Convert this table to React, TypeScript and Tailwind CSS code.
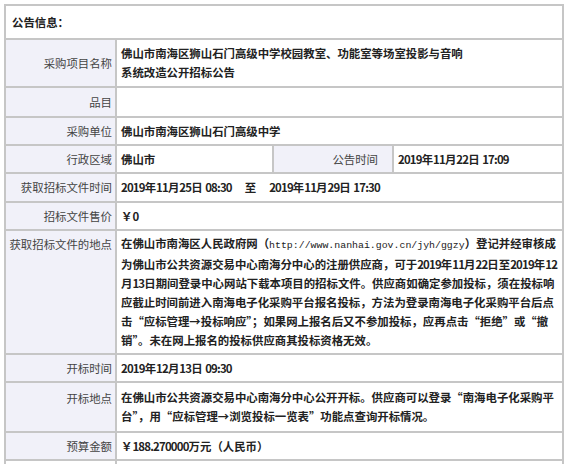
import React from 'react'

const font = "font-['Noto_Sans_CJK_SC','Liberation_Sans',sans-serif]"
const labelCls =
  'bg-[#f1f1f9] border-2 border-[#c6c6c6] text-right pr-[3px] py-0 font-normal text-[#444] whitespace-nowrap'
const valueCls = 'border-2 border-[#c6c6c6] pl-1 py-0 font-bold text-[#222]'

// digits in the original are half-width and tight, so squeeze the numeric runs
function T({ children }: { children: string }) {
  return (
    <>
      {children.split(/([0-9:.]+)/).map((part, i) =>
        /^[0-9:.]+$/.test(part) ? (
          <span key={i} className="tracking-[-0.8px]">
            {part}
          </span>
        ) : (
          part
        )
      )}
    </>
  )
}

function Row({
  label,
  h,
  children,
}: {
  label: string
  h: string
  children?: React.ReactNode
}) {
  return (
    <tr className={h}>
      <td className={labelCls}>{label}</td>
      <td className={valueCls} colSpan={3}>
        {children}
      </td>
    </tr>
  )
}

export default function App() {
  return (
    <div className={`bg-white w-[567px] h-[464px] overflow-hidden pt-1 pl-1 ${font}`}>
      <table className="w-[560px] table-fixed border-collapse border-2 border-[#c6c6c6] text-[11.4px] leading-[19px]">
        <colgroup>
          <col className="w-[111px]" />
          <col className="w-[157px]" />
          <col className="w-[120px]" />
          <col />
        </colgroup>
        <tbody>
          <tr className="h-[34px]">
            <td colSpan={4} className="border-2 border-[#c6c6c6] pl-[6px] font-bold text-[#222]">
              公告信息：
            </td>
          </tr>
          <Row label="采购项目名称" h="h-[48px]">
            佛山市南海区狮山石门高级中学校园教室、功能室等场室投影与音响
            <br />
            系统改造公开招标公告
          </Row>
          <Row label="品目" h="h-[30px]" />
          <Row label="采购单位" h="h-[28px]">
            佛山市南海区狮山石门高级中学
          </Row>
          <tr className="h-[28px]">
            <td className={labelCls}>行政区域</td>
            <td className={valueCls}>佛山市</td>
            <td className={`${labelCls} !pr-[14px]`}>公告时间</td>
            <td className={valueCls}>
              <T>2019年11月22日 17:09</T>
            </td>
          </tr>
          <Row label="获取招标文件时间" h="h-[29px]">
            <span className="whitespace-nowrap">
              <T>2019年11月25日 08:30</T>
              <span className="mx-[13px]">至</span>
              <T>2019年11月29日 17:30</T>
            </span>
          </Row>
          <Row label="招标文件售价" h="h-[28px]">
            ￥0
          </Row>
          <tr className="h-[124px]">
            <td className={`${labelCls} align-top pt-1`}>获取招标文件的地点</td>
            <td className={valueCls} colSpan={3}>
              <div className="whitespace-nowrap">
                <div>
                  在佛山市南海区人民政府网（
                  <span className="font-['Liberation_Mono',monospace] font-normal text-[9.9px]">
                    http://www.nanhai.gov.cn/jyh/ggzy
                  </span>
                  ）登记并经审核成
                </div>
                <div>
                  <T>为佛山市公共资源交易中心南海分中心的注册供应商，可于2019年11月22日至2019年12</T>
                </div>
                <div>
                  <T>月13日期间登录中心网站下载本项目的招标文件。供应商如确定参加投标，须在投标响</T>
                </div>
                <div>应截止时间前进入南海电子化采购平台报名投标，方法为登录南海电子化采购平台后点</div>
                <div>击“应标管理→投标响应”；如果网上报名后又不参加投标，应再点击“拒绝”或“撤</div>
                <div>销”。未在网上报名的投标供应商其投标资格无效。</div>
              </div>
            </td>
          </tr>
          <Row label="开标时间" h="h-[28px]">
            <T>2019年12月13日 09:30</T>
          </Row>
          <tr className="h-[50px]">
            <td className={`${labelCls} align-top pt-[6px]`}>开标地点</td>
            <td className={valueCls} colSpan={3}>
              <div className="whitespace-nowrap">
                <div>在佛山市公共资源交易中心南海分中心公开开标。供应商可以登录“南海电子化采购平</div>
                <div>台”，用“应标管理→浏览投标一览表”功能点查询开标情况。</div>
              </div>
            </td>
          </tr>
          <Row label="预算金额" h="h-[28px]">
            ￥<T>188.270000</T>万元（人民币）
          </Row>
          <tr className="h-[28px]">
            <td className="border-2 border-[#c6c6c6]" />
            <td className="border-2 border-[#c6c6c6]" colSpan={3} />
          </tr>
        </tbody>
      </table>
    </div>
  )
}
